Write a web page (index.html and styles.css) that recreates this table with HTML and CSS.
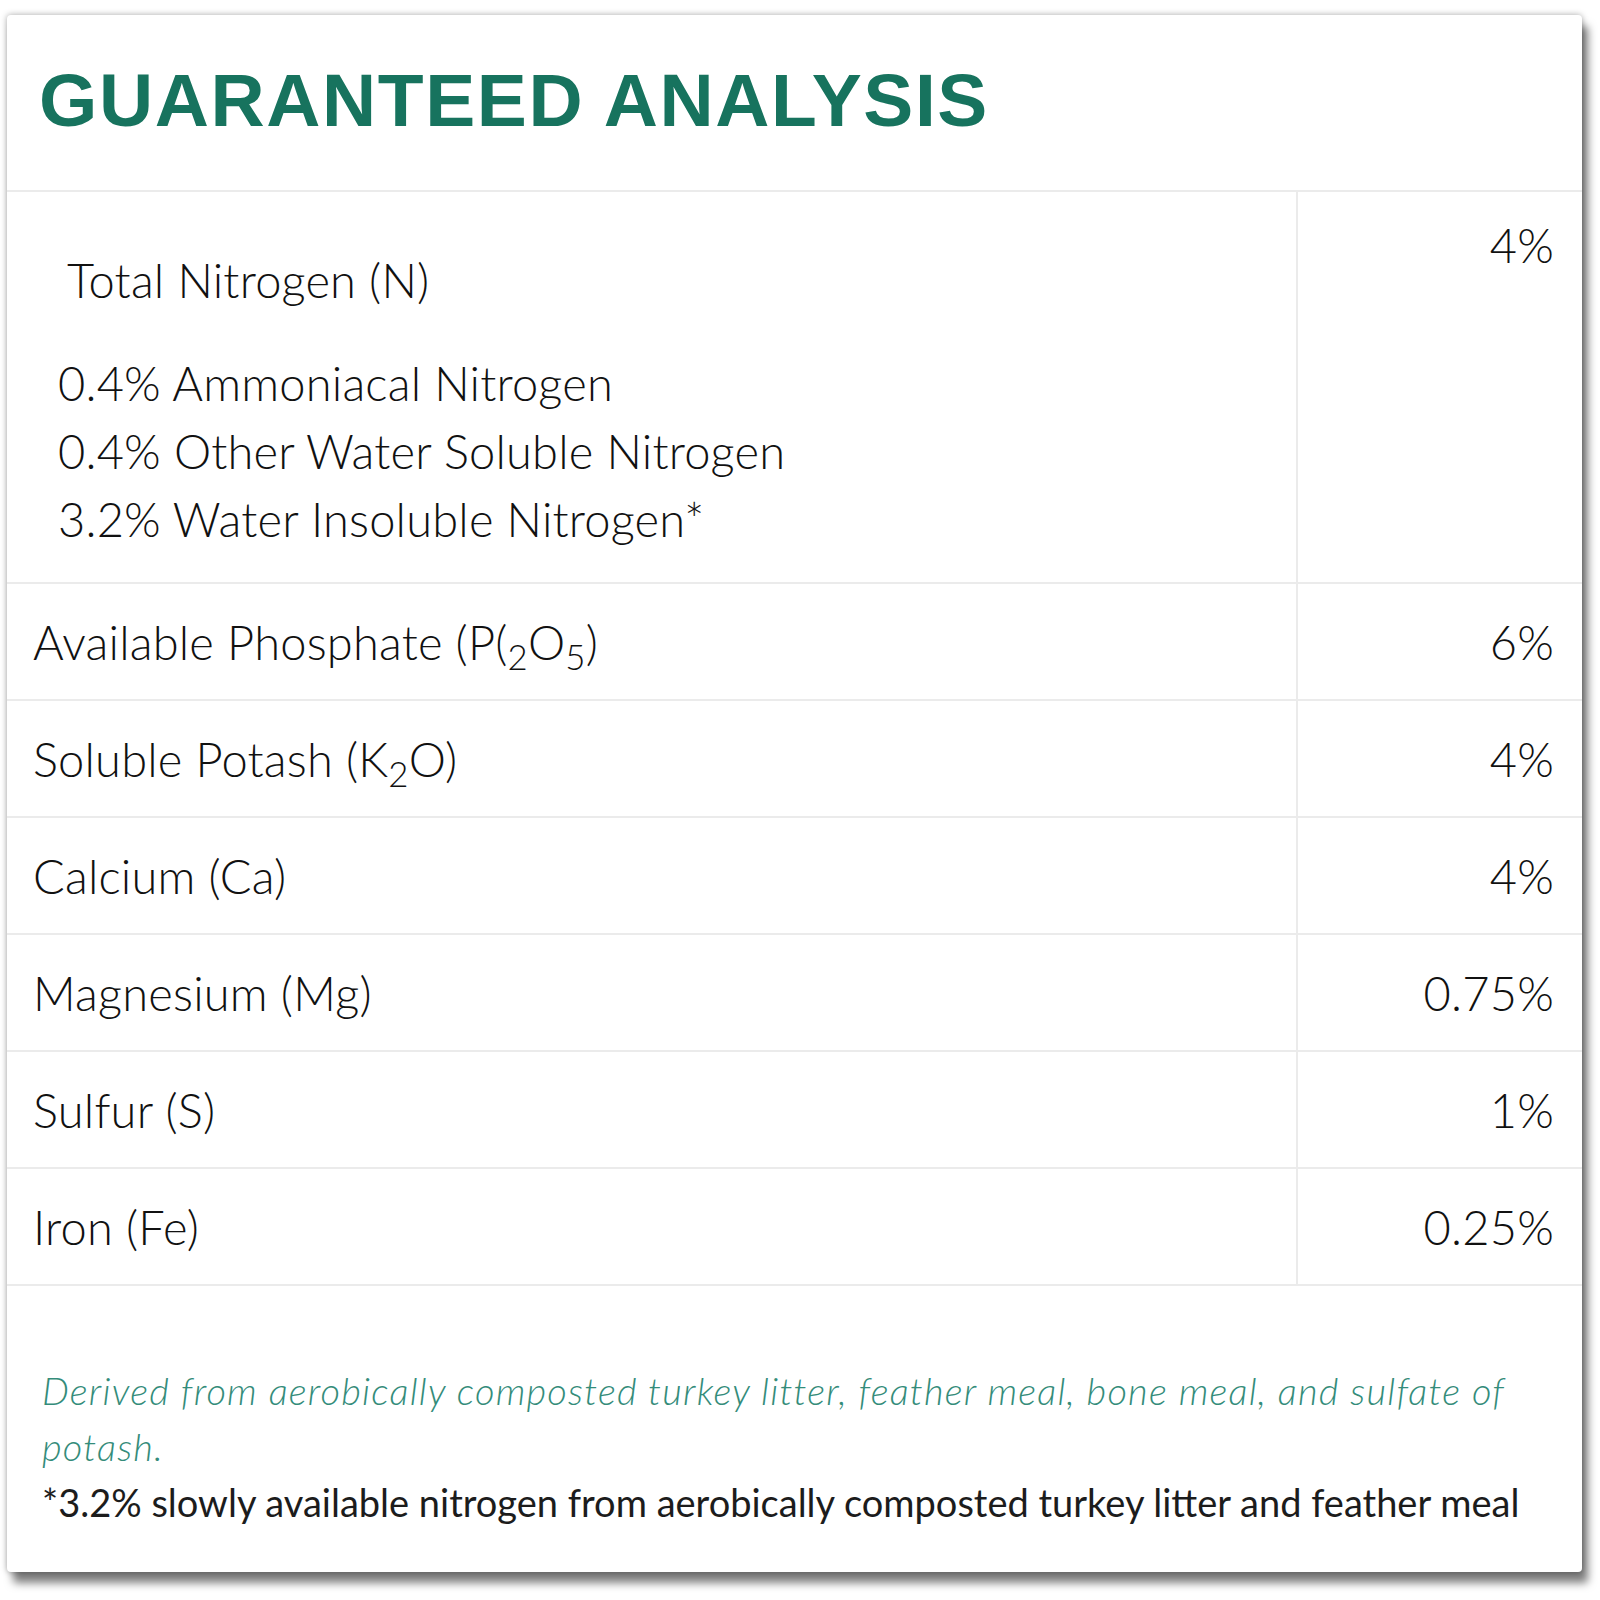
FILE: index.html
```html
<!DOCTYPE html>
<html lang="en">
<head>
<meta charset="utf-8">
<title>Guaranteed Analysis</title>
<link rel="stylesheet" href="styles.css">
</head>
<body>
<section class="card">
  <h2 class="title">GUARANTEED ANALYSIS</h2>
  <div class="table">
    <div class="row row-first">
      <div class="name name-first">
        <div class="main-line">Total Nitrogen (N)</div>
        <ul class="sub-list">
          <li>0.4% Ammoniacal Nitrogen</li>
          <li>0.4% Other Water Soluble Nitrogen</li>
          <li>3.2% Water Insoluble Nitrogen*</li>
        </ul>
      </div>
      <div class="value value-first">4%</div>
    </div>
    <div class="row">
      <div class="name"><span class="label">Available Phosphate (P(<sub>2</sub>O<sub>5</sub>)</span></div>
      <div class="value">6%</div>
    </div>
    <div class="row">
      <div class="name"><span class="label">Soluble Potash (K<sub>2</sub>O)</span></div>
      <div class="value">4%</div>
    </div>
    <div class="row">
      <div class="name"><span class="label">Calcium (Ca)</span></div>
      <div class="value">4%</div>
    </div>
    <div class="row">
      <div class="name"><span class="label">Magnesium (Mg)</span></div>
      <div class="value">0.75%</div>
    </div>
    <div class="row">
      <div class="name"><span class="label">Sulfur (S)</span></div>
      <div class="value">1%</div>
    </div>
    <div class="row">
      <div class="name"><span class="label">Iron (Fe)</span></div>
      <div class="value">0.25%</div>
    </div>
  </div>
  <div class="footer">
    <p class="derived">Derived from aerobically composted turkey litter, feather meal, bone meal, and sulfate of potash.</p>
    <p class="footnote">*3.2% slowly available nitrogen from aerobically composted turkey litter and feather meal</p>
  </div>
</section>
</body>
</html>
```

FILE: styles.css
```css
html, body {
  margin: 0;
  padding: 0;
  background: #ffffff;
}

body {
  min-height: 1600px;
  font-family: Lato, "Open Sans", sans-serif;
  color: #1c1c1c;
}

.card {
  box-sizing: border-box;
  width: 1575px;
  margin: 15px 0 0 7px;
  background: #ffffff;
  border-radius: 4px;
  box-shadow: 6px 11px 9px rgba(0, 0, 0, 0.5), 0 0 6px rgba(0, 0, 0, 0.35);
  overflow: hidden;
}

.title {
  box-sizing: border-box;
  height: 175px;
  margin: 0;
  padding: 48px 0 0 32px;
  font-family: "Liberation Sans", Arial, sans-serif;
  font-weight: 700;
  font-size: 75px;
  line-height: 75px;
  letter-spacing: 1.6px;
  color: #17735e;
}

.table {
  border-top: 2px solid #ebebeb;
}

.row {
  box-sizing: border-box;
  display: grid;
  grid-template-columns: 1289px 1fr;
  height: 117px;
  border-bottom: 2px solid #ebebeb;
  font-size: 47px;
  font-weight: 300;
  letter-spacing: 0.2px;
  line-height: 56px;
  color: #111111;
}

.row-first {
  height: 392px;
}

.name {
  display: flex;
  align-items: center;
  padding-left: 26px;
}

.value {
  display: flex;
  align-items: center;
  justify-content: flex-end;
  padding-right: 28px;
  border-left: 2px solid #ebebeb;
}

.name-first {
  display: block;
  padding-top: 54px;
  padding-left: 60px;
}

.main-line {
  line-height: 68px;
}

.sub-list {
  list-style: none;
  margin: 35px 0 0 -9px;
  padding: 0;
  line-height: 68px;
}

.value-first {
  align-items: flex-start;
  padding-top: 19px;
  line-height: 68px;
}

.label sub {
  font-size: 0.74em;
  line-height: 0;
  vertical-align: -0.3em;
}

.footer {
  box-sizing: border-box;
  height: 286px;
  padding: 76px 30px 0 35px;
  font-size: 38px;
  line-height: 56px;
}

.footer p {
  margin: 0;
}

.derived {
  font-style: italic;
  font-weight: 300;
  letter-spacing: 1.2px;
  color: #348c7a;
}

.footnote {
  color: #1c1c1c;
}
```
